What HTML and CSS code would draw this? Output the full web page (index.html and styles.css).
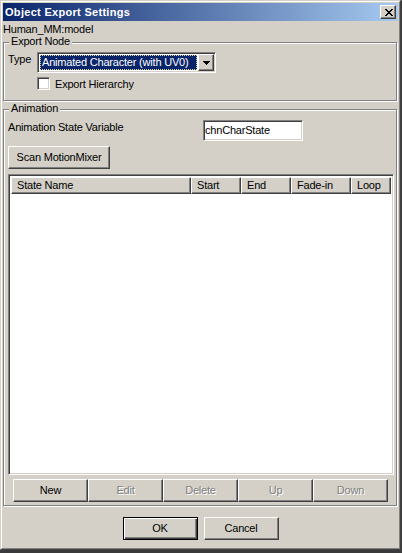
FILE: index.html
```html
<!DOCTYPE html>
<html>
<head>
<meta charset="utf-8">
<title>Object Export Settings</title>
<link rel="stylesheet" href="styles.css">
</head>
<body>
<div class="window">
  <div class="frame">
    <div class="titlebar">
      <span class="title">Object Export Settings</span>
      <div class="close raised">
        <svg width="8" height="7" viewBox="0 0 8 7" shape-rendering="crispEdges">
          <rect x="0" y="0" width="2" height="1"/><rect x="6" y="0" width="2" height="1"/>
          <rect x="1" y="1" width="2" height="1"/><rect x="5" y="1" width="2" height="1"/>
          <rect x="2" y="2" width="4" height="1"/>
          <rect x="3" y="3" width="2" height="1"/>
          <rect x="2" y="4" width="4" height="1"/>
          <rect x="1" y="5" width="2" height="1"/><rect x="5" y="5" width="2" height="1"/>
          <rect x="0" y="6" width="2" height="1"/><rect x="6" y="6" width="2" height="1"/>
        </svg>
      </div>
    </div>
    <div class="content">
      <div class="objname">Human_MM:model</div>

      <div class="group g-export">
        <span class="legend">Export Node</span>
        <div class="type-row">
          <span class="type-lbl">Type</span>
          <div class="combo sunken">
            <div class="combo-text"><span class="sel">Animated Character (with UV0)</span></div>
            <div class="combo-btn raised">
              <svg width="7" height="4" viewBox="0 0 7 4" shape-rendering="crispEdges">
                <rect x="0" y="0" width="7" height="1"/><rect x="1" y="1" width="5" height="1"/>
                <rect x="2" y="2" width="3" height="1"/><rect x="3" y="3" width="1" height="1"/>
              </svg>
            </div>
          </div>
        </div>
        <div class="check-row">
          <span class="checkbox sunken"></span>
          <span class="check-lbl">Export Hierarchy</span>
        </div>
      </div>

      <div class="group g-anim">
        <span class="legend">Animation</span>
        <div class="var-row">
          <span class="var-lbl">Animation State Variable</span>
          <div class="edit sunken">chnCharState</div>
        </div>
        <div class="btn raised scan">Scan MotionMixer</div>
        <div class="list sunken">
          <div class="list-header">
            <div class="col raised c-name">State Name</div>
            <div class="col raised c-start">Start</div>
            <div class="col raised c-end">End</div>
            <div class="col raised c-fade">Fade-in</div>
            <div class="col raised c-loop">Loop</div>
          </div>
          <div class="list-body"></div>
        </div>
        <div class="btn-row">
          <div class="btn raised">New</div>
          <div class="btn raised disabled">Edit</div>
          <div class="btn raised disabled">Delete</div>
          <div class="btn raised disabled">Up</div>
          <div class="btn raised disabled">Down</div>
        </div>
      </div>

      <div class="dialog-btns">
        <div class="btn default">OK</div>
        <div class="btn raised">Cancel</div>
      </div>
    </div>
  </div>
</div>
</body>
</html>
```
FILE: styles.css
```css
* { box-sizing: border-box; }
body {
  margin: 0;
  background: #3a3a3a;
  font-family: "Liberation Sans", Arial, sans-serif;
  font-size: 11px;
  line-height: 13px;
  letter-spacing: -0.2px;
  color: #000;
}
.window {
  width: 401px;
  height: 550px;
  border: 1px solid;
  border-color: #d4d0c8 #404040 #404040 #d4d0c8;
  background: #d4d0c8;
}
.frame {
  height: 100%;
  border: 1px solid;
  border-color: #fff #808080 #808080 #fff;
  padding: 1px;
  display: flex;
  flex-direction: column;
}
.raised {
  background: #d4d0c8;
  border: 1px solid;
  border-color: #fff #404040 #404040 #fff;
  box-shadow: inset -1px -1px 0 #808080;
}
.sunken {
  background: #fff;
  border: 1px solid;
  border-color: #808080 #fff #fff #808080;
  box-shadow: inset 1px 1px 0 #404040, inset -1px -1px 0 #d4d0c8;
}
.titlebar {
  height: 18px;
  display: flex;
  align-items: center;
  padding: 0 2px;
  background: linear-gradient(to right, #0a246a, #a6caf0);
}
.title {
  color: #fff;
  font-weight: bold;
  font-size: 11px;
  letter-spacing: 0.3px;
}
.close {
  margin-left: auto;
  width: 16px;
  height: 14px;
  display: flex;
  align-items: center;
  justify-content: center;
  padding-left: 1px;
}
.close svg { fill: #000; display: block; }

.content {
  padding-top: 2px;
}
.objname { height: 13px; }

.group {
  position: relative;
  width: 394px;
  border: 1px solid #808080;
  box-shadow: 1px 1px 0 #fff, inset 1px 1px 0 #fff;
}
.legend {
  position: absolute;
  top: -8px;
  left: 5px;
  padding: 0 2px;
  background: #d4d0c8;
}
.g-export {
  margin-top: 6px;
  padding: 9px 4px 10px 4px;
}
.type-row {
  display: flex;
  align-items: flex-start;
}
.type-lbl {
  width: 29px;
  margin-top: 1px;
}
.combo {
  width: 179px;
  height: 21px;
  display: flex;
  padding: 1px;
}
.combo-text {
  flex: 1;
  padding: 1px;
  display: flex;
}
.sel {
  flex: 1;
  background: #0a246a;
  color: #fff;
  border: 1px dotted #d8d4a0;
  padding-left: 1px;
  line-height: 13px;
}
.combo-btn {
  width: 16px;
  height: 17px;
  display: flex;
  align-items: center;
  justify-content: center;
  box-shadow: inset -1px -1px 0 #808080, inset 1px 1px 0 #d4d0c8;
}
.combo-btn svg { fill: #000; display: block; margin-top: 1px; }
.check-row {
  display: flex;
  align-items: center;
  margin-top: 4px;
  padding-left: 29px;
  height: 13px;
}
.checkbox {
  width: 13px;
  height: 13px;
}
.check-lbl { margin-left: 5px; margin-top: 2px; }

.g-anim {
  margin-top: 8px;
  padding: 10px 4px 3px 4px;
}
.var-row {
  display: flex;
  align-items: flex-start;
  height: 21px;
}
.var-lbl {
  width: 195px;
  margin-top: 1px;
}
.edit {
  width: 100px;
  height: 21px;
  padding-left: 1px;
  line-height: 19px;
}
.btn {
  height: 23px;
  display: flex;
  align-items: center;
  justify-content: center;
}
.scan {
  width: 102px;
  margin-top: 5px;
}
.list {
  margin-top: 5px;
  width: 386px;
  height: 301px;
  padding: 2px;
  display: flex;
  flex-direction: column;
}
.list-header {
  display: flex;
  height: 17px;
}
.col {
  height: 17px;
  padding-left: 5px;
  line-height: 15px;
  box-shadow: inset -1px -1px 0 #808080;
}
.c-name { width: 180px; }
.c-start { width: 50px; }
.c-end { width: 50px; }
.c-fade { width: 60px; }
.c-loop { width: 40px; }
.list-body { flex: 1; background: #fff; }

.btn-row {
  display: flex;
  margin-top: 4px;
  margin-left: 5px;
}
.btn-row .btn { width: 75px; }
.disabled {
  color: #808080;
  text-shadow: 1px 1px 0 #fff;
}
.dialog-btns {
  display: flex;
  justify-content: center;
  gap: 6px;
  margin-top: 11px;
}
.dialog-btns .btn { width: 75px; }
.default {
  background: #d4d0c8;
  border: 1px solid #000;
  box-shadow: inset 1px 1px 0 #fff, inset -1px -1px 0 #404040, inset -2px -2px 0 #808080;
}
```
